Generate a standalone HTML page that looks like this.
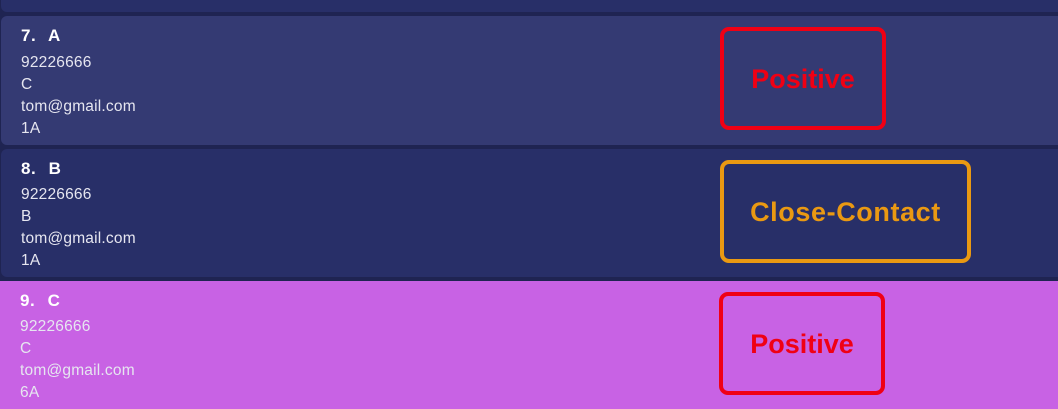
<!DOCTYPE html>
<html><head><meta charset="utf-8"><style>
*{margin:0;padding:0;box-sizing:border-box}
html,body{width:1058px;height:409px;overflow:hidden}
body{background:#1f2452;font-family:"Liberation Sans",sans-serif;position:relative}
.card{position:absolute;left:1px;width:1070px;border-radius:6px;overflow:hidden}
.t{position:absolute;left:20px;top:10px;font-size:17px;font-weight:bold;color:#fff;letter-spacing:0.5px;word-spacing:1px}
.l{position:absolute;left:20px;font-size:15.5px;color:#e6e6f0;letter-spacing:0.2px}
.b{position:absolute;left:719px;top:11px;height:103px;border:4px solid;border-radius:9px;display:flex;align-items:center;justify-content:center;font-size:27px;font-weight:bold;padding-top:1px}
</style></head><body>
<div class="card" style="top:-120px;height:132px;background:#282f68"></div>
<div class="card" style="top:16px;height:129px;background:#343a73">
<div class="t">7.&nbsp; A</div>
<div class="l" style="top:38px">92226666</div>
<div class="l" style="top:60px">C</div>
<div class="l" style="top:82px">tom@gmail.com</div>
<div class="l" style="top:104px">1A</div>
<div class="b" style="width:166px;border-color:#f00014;color:#f00014">Positive</div>
</div>
<div class="card" style="top:149px;height:128px;background:#282f68">
<div class="t">8.&nbsp; B</div>
<div class="l" style="top:37px">92226666</div>
<div class="l" style="top:59px">B</div>
<div class="l" style="top:81px">tom@gmail.com</div>
<div class="l" style="top:103px">1A</div>
<div class="b" style="width:251px;border-color:#ea9912;color:#ea9912;letter-spacing:0.6px">Close-Contact</div>
</div>
<div class="card" style="top:281px;left:0;height:128px;background:#c862e4;border-radius:0">
<div class="t">9.&nbsp; C</div>
<div class="l" style="top:37px">92226666</div>
<div class="l" style="top:59px">C</div>
<div class="l" style="top:81px">tom@gmail.com</div>
<div class="l" style="top:103px">6A</div>
<div class="b" style="width:166px;border-color:#f00014;color:#f00014">Positive</div>
</div>
</body></html>
